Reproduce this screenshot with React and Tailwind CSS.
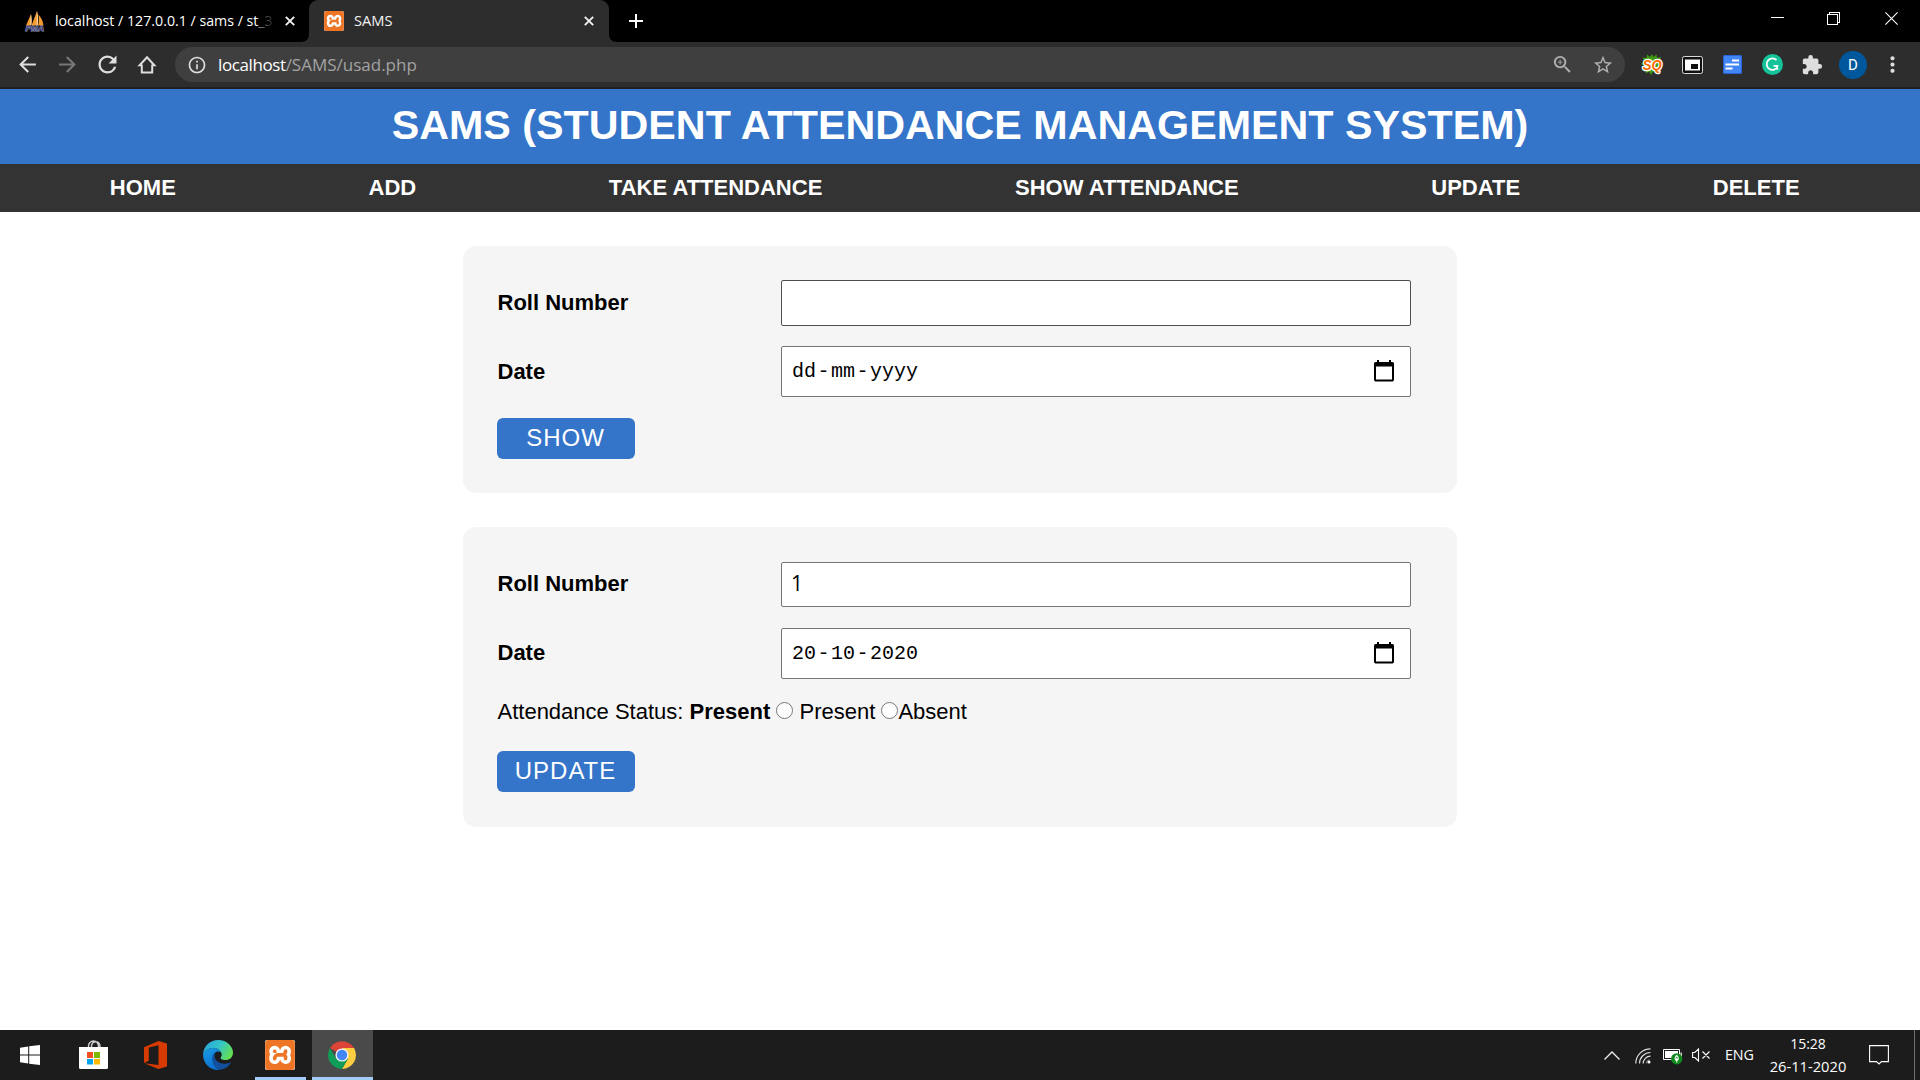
import {
  MdArrowBack,
  MdArrowForward,
  MdRefresh,
  MdInfoOutline,
  MdZoomIn,
  MdStarBorder,
  MdExtension,
  MdMoreVert,
} from "react-icons/md";
import { SiXampp } from "react-icons/si";

function CloseX() {
  return (
    <svg className="size-[10px]" viewBox="0 0 10 10" fill="none" stroke="#f1f1f1" strokeWidth="1.9">
      <path d="M.8.8l8.4 8.4M9.2.8L.8 9.2" />
    </svg>
  );
}

function XamppIcon({ className }) {
  return (
    <span className={className}>
      <SiXampp className="size-full rounded-[2px] bg-white text-[#ee7426]" />
    </span>
  );
}

function PmaIcon() {
  return (
    <svg className="h-5 w-5 overflow-visible" viewBox="0 0 20 20">
      <path d="M1 14.500L6 3v11.500zM6.500 14.500L12 0c1 5 1 9 .5 14.500zM13.200 14.500c.8-4 .8-7 .2-11C16 6 18 10 18.500 14.500z" fill="#f29a2e" />
      <path d="M6 3c1 4 1 8 .5 11H5zM12 0c1.300 5 1.300 10 .8 14h-1.300z" fill="#fcd29a" />
      <text x=".5" y="19.600" fontSize="7.500" fontWeight="bold" fontStyle="italic" fontFamily="Liberation Sans" fill="#3c4078" stroke="#a9abc8" strokeWidth=".8" textLength="18.500" lengthAdjust="spacingAndGlyphs" paintOrder="stroke">
        PMA
      </text>
    </svg>
  );
}

function TabStrip() {
  return (
    <div className="flex h-[42px] bg-black">
      <div className="flex w-[301px] items-center pl-[25px] pb-px">
        <PmaIcon />
        <div className="ml-[10px] w-[222px] overflow-hidden whitespace-nowrap text-[14.2px] text-white">
          localhost / 127.0.0.1 / sams / st
          <span className="bg-linear-to-r from-[#999] to-[#222] bg-clip-text text-transparent">_3</span>
        </div>
        <div className="ml-[8px]">
          <CloseX />
        </div>
      </div>
      <svg className="h-[42px] w-2" viewBox="0 0 8 42">
        <path d="M8 34v8H0c5 0 8-3 8-8z" fill="#2d2d2d" />
      </svg>
      <div className="flex w-[300px] items-center rounded-t-[9px] bg-[#2d2d2d] pl-[15px] pr-[15px] pb-px">
        <XamppIcon className="block size-5" />
        <span className="ml-[10px] flex-1 text-[14.7px] text-[#f1f1f1]">SAMS</span>
        <CloseX />
      </div>
      <svg className="h-[42px] w-2" viewBox="0 0 8 42">
        <path d="M0 34v8h8c-5 0-8-3-8-8z" fill="#2d2d2d" />
      </svg>
      <svg className="ml-[11px] mt-[13px] size-4" viewBox="0 0 16 16" stroke="#fff" strokeWidth="2">
        <path d="M8 1v14M1 8h14" />
      </svg>
      <div className="ml-auto flex gap-[44px] pr-[22px] pt-[12px]">
        <svg className="size-[13px]" viewBox="0 0 13 13" shapeRendering="crispEdges">
          <path d="M0 5h13v1H0z" fill="#fff" />
        </svg>
        <svg className="-ml-px size-[13px]" viewBox="0 0 13 13" fill="none" stroke="#fff" shapeRendering="crispEdges">
          <path d="M.5 2.500h10v10H.5zM2.500 2.500v-2h10v10h-2" />
        </svg>
        <svg className="ml-px size-[13px]" viewBox="0 0 13 13" stroke="#fff" strokeWidth="1.100">
          <path d="M.4.4l12.200 12.200M12.600.4L.4 12.600" />
        </svg>
      </div>
    </div>
  );
}

function Toolbar() {
  return (
    <div className="flex h-[47px] items-center border-b-2 border-[#1f1f1f] bg-[#2d2d2d] pl-[15px]">
      <div className="flex items-center gap-[15px] text-[25px] text-[#dedede]">
        <MdArrowBack />
        <MdArrowForward className="text-[#787878]" />
        <MdRefresh className="text-[27px] -mx-px" />
        <svg className="size-[25px]" viewBox="0 0 25 25" fill="none" stroke="#dedede" strokeWidth="2">
          <path d="M6.800 12.500v8h10.400v-8M6.800 13.300H4.600L12 5.300l7.400 8h-2.200" />
        </svg>
      </div>
      <div className="ml-[15px] flex h-[35px] w-[1450px] items-center rounded-full bg-[#3f3f3f] pl-[12px] pr-[10px]">
        <MdInfoOutline className="text-[20px] text-[#dedede]" />
        <div className="ml-[11px] flex-1 text-[17px] leading-none text-[#a3a3a3]">
          <span className="tracking-[-0.4px] text-white">localhost</span>/SAMS/usad.php
        </div>
        <MdZoomIn className="mr-[18px] text-[23px] text-[#b0b0b0]" />
        <MdStarBorder className="mr-px text-[22px] text-[#b0b0b0]" />
      </div>
      <div className="ml-[16px] flex items-center">
        <svg className="h-[21px] w-[23px]" viewBox="0 0 23 21">
          <path d="M11 0l1.500 3 3-2.500.5 3.500 4-1-1.500 4 3 3-3 2 1.500 4-4-.5-1 4-3-2-2 3.500-2-3.500-3 2-.5-3.500-3.500.5L3 12 0 10l3-3-1.500-3.500L5.500 4 6 .5l3 2.500z" fill="#3f9a12" />
          <text x="11.200" y="15.500" textAnchor="middle" fontSize="14" fontWeight="bold" fontStyle="italic" fontFamily="Liberation Sans" textLength="19" lengthAdjust="spacingAndGlyphs" fill="#ff6a00" stroke="#fff" strokeWidth="2.600" paintOrder="stroke" strokeLinejoin="round">
            SQ
          </text>
        </svg>
        <svg className="ml-[18px] h-[18px] w-[21px]" viewBox="0 0 21 18">
          <rect x=".5" y=".5" width="20" height="17" rx="1.800" fill="#111" stroke="#d8d8d8" />
          <path d="M3 3.500h15v11H3z" fill="#fff" />
          <path d="M9 8h7v5H9z" fill="#111" />
        </svg>
        <svg className="ml-[20px] size-[19px]" viewBox="0 0 19 19">
          <rect width="19" height="19" rx="2" fill="#4285f4" />
          <rect x=".5" y=".5" width="18" height="18" rx="1.500" fill="none" stroke="#2b62d9" />
          <path d="M9 5.500h7M2.500 9.500H16M2.500 13.500h7" stroke="#fff" strokeWidth="2" />
        </svg>
        <svg className="ml-[20px] size-[21px]" viewBox="0 0 21 21">
          <circle cx="10.500" cy="10.500" r="10.500" fill="#15c39a" />
          <path d="M14.500 6.200A5.700 5.700 0 1 0 15.600 12.500M11.600 11.800h4.600M15.300 11.500v4.200" fill="none" stroke="#fff" strokeWidth="1.800" />
        </svg>
        <MdExtension className="ml-[18px] text-[22px] text-[#dedede]" />
        <div className="ml-[16px] flex size-7 items-center justify-center rounded-full bg-[#01579b] pt-px font-[Roboto,sans-serif] text-[15px] text-white">
          D
        </div>
        <MdMoreVert className="ml-[13px] text-[25px] text-[#dedede]" />
      </div>
    </div>
  );
}

const NAV = ["HOME", "ADD", "TAKE ATTENDANCE", "SHOW ATTENDANCE", "UPDATE", "DELETE"];

function CalendarIcon() {
  return (
    <svg className="mb-px h-[22px] w-5" viewBox="0 0 20 22">
      <path d="M3 0h2v2h10V0h2v2h1.500Q20 2 20 3.500v16q0 2-1.500 2h-17Q0 21.500 0 19.500v-16Q0 2 1.500 2H3zM2 6.500v13h16v-13z" fillRule="evenodd" />
    </svg>
  );
}

function DateField({ parts }) {
  return (
    <div className="flex h-[51px] w-[630px] items-center rounded-[2px] border border-[#767676] bg-white pl-[10px] pr-[16px]">
      <div className="flex flex-1 gap-[1.5px] font-['Liberation_Mono',monospace] text-[20px]">
        <span>{parts[0]}</span>
        <span>-</span>
        <span>{parts[1]}</span>
        <span>-</span>
        <span>{parts[2]}</span>
      </div>
      <CalendarIcon />
    </div>
  );
}

function Field({ label, labelClass = "pb-[2px]", children }) {
  return (
    <div className="flex items-center">
      <label className={`w-[284px] pl-[0.5px] font-bold ${labelClass}`}>{label}</label>
      {children}
    </div>
  );
}

function Button({ children }) {
  return (
    <button className="flex h-[41px] w-[138px] items-center justify-center rounded-[6px] bg-[#3474c9] pb-[3px] pr-px text-[24px] tracking-[1px] text-white">
      {children}
    </button>
  );
}

function Radio() {
  return (
    <input
      type="radio"
      name="status"
      className="size-[17px] appearance-none rounded-full border border-[#767676] bg-white align-[0px]"
    />
  );
}

function Page() {
  return (
    <div className="flex flex-1 flex-col bg-white font-['Liberation_Sans',Arial,sans-serif] text-[22px] leading-[25px] text-black">
      <h1 className="flex h-[75px] items-center justify-center bg-[#3474c9] pb-[2px] text-[41.25px] font-bold text-white">
        SAMS (STUDENT ATTENDANCE MANAGEMENT SYSTEM)
      </h1>
      <nav className="flex h-[48px] items-center justify-around bg-[#333] pb-[2px] pl-[13.5px] pr-[24px] font-bold text-white">
        {NAV.map((n) => (
          <a key={n}>{n}</a>
        ))}
      </nav>
      <main className="flex flex-col items-center gap-[34px] pt-[34px]">
        <section className="flex h-[247px] w-[994px] flex-col rounded-[13px] bg-[#f5f5f5] px-[34px] pt-[34px]">
          <Field label="Roll Number" labelClass="pb-px">
            <input className="h-[46px] w-[630px] rounded-[2px] border border-[#4f4f4f] bg-white px-[10px]" />
          </Field>
          <div className="mt-[20px]">
            <Field label="Date" labelClass="pb-px">
              <DateField parts={["dd", "mm", "yyyy"]} />
            </Field>
          </div>
          <div className="mt-[21px]">
            <Button>SHOW</Button>
          </div>
        </section>
        <section className="flex h-[300px] w-[994px] flex-col rounded-[13px] bg-[#f5f5f5] px-[34px] pt-[35px]">
          <Field label="Roll Number">
            <input
              defaultValue="1"
              className="h-[45px] w-[630px] rounded-[2px] border border-[#767676] bg-white px-[9px] pb-[3px] font-['Open_Sans',sans-serif] text-[21px]"
            />
          </Field>
          <div className="mt-[21px]">
            <Field label="Date">
              <DateField parts={["20", "10", "2020"]} />
            </Field>
          </div>
          <p className="mt-[20px] h-[25px] pl-[0.5px]">
            Attendance Status: <b>Present</b> <Radio /> Present <Radio />
            Absent
          </p>
          <div className="mt-[27px]">
            <Button>UPDATE</Button>
          </div>
        </section>
      </main>
    </div>
  );
}

function Taskbar() {
  return (
    <footer className="flex h-[50px] bg-[#1c1c1c] text-white">
      <div className="flex w-[60px] items-center justify-center">
        <svg className="size-5" viewBox="0 0 20 20" fill="#fff">
          <path d="M0 2.700l8.200-1.200v8H0zM9.200 1.300L20 0v9.500H9.200zM0 10.500h8.200v8L0 17.300zM9.200 10.500H20V20L9.200 18.700z" />
        </svg>
      </div>
      <div className="flex w-[66px] items-center justify-center pb-px">
        <svg className="h-[29px] w-[29px]" viewBox="0 0 29 29">
          <path d="M9.500 8V6a5 5 0 0 1 10 0v2M12.500 8V6a4 4 0 0 1 8.500 0v2" fill="none" stroke="#d0d0d0" strokeWidth="1.400" />
          <path d="M0 7h29v20.500q0 1.500-1.500 1.500h-26Q0 29 0 27.500z" fill="#fff" />
          <path d="M8 12h6v6H8z" fill="#f25022" />
          <path d="M15 12h6v6h-6z" fill="#7fba00" />
          <path d="M8 19h6v5.500H8z" fill="#00a4ef" />
          <path d="M15 19h6v5.500h-6z" fill="#ffb900" />
        </svg>
      </div>
      <div className="flex w-[59px] items-center justify-center pb-px">
        <svg className="h-[28px] w-[23px]" viewBox="0 0 23 28">
          <path d="M0 6.200L14.500 0 23 2.500v23L14.500 28 .3 22.200l14.200 1.700V4.200L4.800 6.500v13.300L0 22z" fill="#d83b01" />
        </svg>
      </div>
      <div className="flex w-[65px] items-center justify-center">
        <svg className="size-[30px]" viewBox="0 0 30 30">
          <defs>
            <linearGradient id="edgeTop" x1="0" y1=".2" x2="1" y2=".6">
              <stop offset="0" stopColor="#2aa5e0" />
              <stop offset=".5" stopColor="#33c3c8" />
              <stop offset="1" stopColor="#66e04f" />
            </linearGradient>
            <linearGradient id="edgeLeft" x1="0" y1="0" x2=".5" y2="1">
              <stop offset="0" stopColor="#1b9de2" />
              <stop offset="1" stopColor="#0a6fd0" />
            </linearGradient>
          </defs>
          <path d="M0 14C1 5.500 7.500 0 15 0c9 0 15 6.500 15 12.500 0 5-3.500 7.500-7.500 7.500-3.500 0-5.500-1.200-4.700-2.700 1-1.500 1-2 .9-3C18.300 10.500 14.500 8 10.500 8 5.500 8 1.800 10.500 0 14z" fill="url(#edgeTop)" />
          <path d="M0 14C1.800 10.500 5.500 8 10.500 8c3.500 0 6.500 1.700 7.700 4.500-3.500-2.500-7-.5-8 3-1.700 6 1 11.500 5.800 14.400C7.500 30.600 0 24 0 14z" fill="url(#edgeLeft)" />
          <path d="M12.500 12.500c-2 1.200-3.200 3-3.200 6C9.300 24 13 29 17 29.800c4.500-.5 8.500-3 10.700-6.800.3-.6-.2-.9-.8-.6-8 3.600-15.300-1-15.300-6.400 0-1.300.3-2.500.9-3.500z" fill="#124f9c" />
        </svg>
      </div>
      <div className="ml-[5px] mr-[6px] flex w-[51px] flex-col items-center justify-between pt-[10px]">
        <XamppIcon className="mr-px block size-[30px]" />
        <div className="h-[3px] w-full bg-[#a1cdf8]" />
      </div>
      <div className="flex w-[61px] flex-col items-center justify-between bg-[#4a4a4a] pt-[11px]">
        <svg className="mr-px size-[28px]" viewBox="0 0 28 28">
          <path d="M14 14L2 7A14 14 0 0 1 26.100 7z" fill="#db4437" />
          <path d="M14 7h12.100A14 14 0 0 1 14 28l6-10.500z" fill="#ffcd40" />
          <path d="M1.900 7A14 14 0 0 0 14 28l6-10.500L8 17.500z" fill="#0f9d58" />
          <circle cx="14" cy="14" r="6.600" fill="#f1f1f1" />
          <circle cx="14" cy="14" r="5.200" fill="#4285f4" />
        </svg>
        <div className="h-[3px] w-full bg-[#a1cdf8]" />
      </div>

      <div className="ml-auto flex items-center">
        <svg className="h-[9px] w-4" viewBox="0 0 16 9" fill="none" stroke="#eee" strokeWidth="1.300">
          <path d="M.5 8.500L8 1l7.500 7.500" />
        </svg>
        <svg className="ml-[15px] mt-[2px] size-[16px]" viewBox="0 0 16 16" fill="none" stroke="#ddd" strokeWidth="1.200">
          <path d="M.8 15.500A14.700 14.700 0 0 1 15.500.8M4.500 15.500a11 11 0 0 1 11-11M8.200 15.500a7.300 7.300 0 0 1 7.300-7.300" />
          <path d="M11.500 15.500a3.500 3.500 0 0 1 3.500-3.500" opacity=".5" />
          <circle cx="14" cy="14" r="1.500" fill="#fff" stroke="none" />
        </svg>
        <svg className="ml-[12px] mt-[4px] h-4 w-[20px]" viewBox="0 0 20 16">
          <path d="M.5.500h16v10H.5z" fill="none" stroke="#fff" />
          <path d="M2 2h13v7H2zM17.500 3.500h1.300v4h-1.300z" fill="#fff" />
          <circle cx="13.700" cy="9.800" r="5.600" fill="#0f8a1f" />
          <path d="M13.700 6.500c2 2 2.300 4 0 5.200-2.300-1.200-2-3.200 0-5.200zM13.700 9v4.500" fill="none" stroke="#fff" strokeWidth="1.100" />
        </svg>
        <svg className="ml-[9px] h-[14px] w-[19px]" viewBox="0 0 19 14" fill="none" stroke="#fff" strokeWidth="1.100">
          <path d="M.6 4.500h2.200L6.500 1v12L2.800 9.500H.6zM10.500 3.500l7 7M17.500 3.500l-7 7" />
        </svg>
        <span className="ml-[14px] text-[14.300px]">ENG</span>
        <div className="ml-[15px] flex w-[78px] flex-col items-center text-[14.700px] leading-[23px]">
          <span className="text-[14px]">15:28</span>
          <span>26-11-2020</span>
        </div>
        <svg className="ml-[22px] h-5 w-5" viewBox="0 0 20 20" fill="none" stroke="#fff" strokeWidth="1.100">
          <path d="M.6.6h18.800v16H12.500L10 19l-2.500-2.400H.6z" />
        </svg>
        <div className="ml-[25px] mr-[5px] h-[50px] w-px bg-[#707070]" />
      </div>
    </footer>
  );
}

export default function App() {
  return (
    <div className="flex h-[1080px] w-[1920px] flex-col overflow-hidden font-['Open_Sans',sans-serif]">
      <TabStrip />
      <Toolbar />
      <Page />
      <Taskbar />
    </div>
  );
}
